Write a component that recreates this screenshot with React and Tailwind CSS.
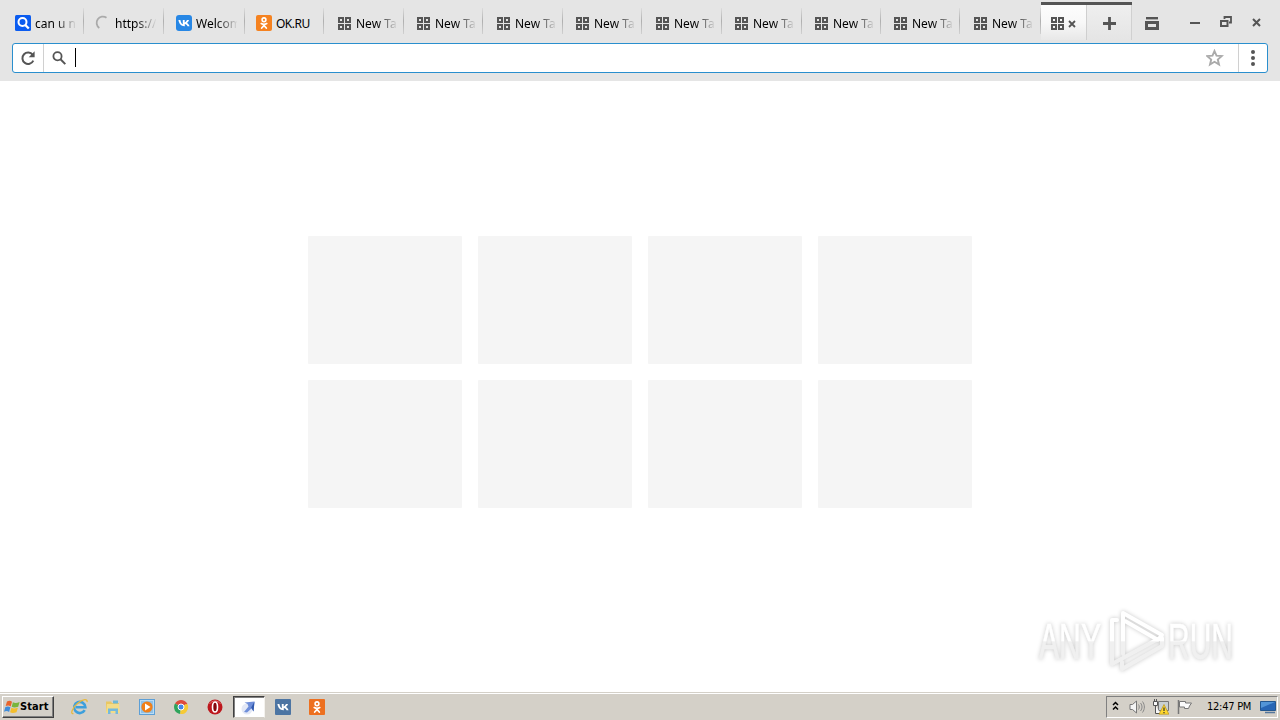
const tabs = [
  { id: 1, title: "can u n", icon: "search", width: "w-[80px]", pad: "pl-[11px]" },
  { id: 2, title: "https://", icon: "loading", width: "w-[80px]", pad: "pl-[11px]" },
  { id: 3, title: "Welcom", icon: "vk", width: "w-[81px]", pad: "pl-[12px]" },
  { id: 4, title: "OK.RU", icon: "ok", width: "w-[79px]", pad: "pl-[11px]" },
  { id: 5, title: "New Ta", icon: "grid", width: "w-[80px]", pad: "pl-[12px]" },
  { id: 6, title: "New Ta", icon: "grid", width: "w-[79px]", pad: "pl-[11px]" },
  { id: 7, title: "New Ta", icon: "grid", width: "w-[80px]", pad: "pl-[12px]" },
  { id: 8, title: "New Ta", icon: "grid", width: "w-[79px]", pad: "pl-[11px]" },
  { id: 9, title: "New Ta", icon: "grid", width: "w-[80px]", pad: "pl-[12px]" },
  { id: 10, title: "New Ta", icon: "grid", width: "w-[80px]", pad: "pl-[11px]" },
  { id: 11, title: "New Ta", icon: "grid", width: "w-[79px]", pad: "pl-[11px]" },
  { id: 12, title: "New Ta", icon: "grid", width: "w-[79px]", pad: "pl-[11px]" },
  { id: 13, title: "New Ta", icon: "grid", width: "w-[81px]", pad: "pl-[12px]" },
];

const tiles = [1, 2, 3, 4, 5, 6, 7, 8];

function Svg({ w = 16, h = 16, className = "", children }) {
  return (
    <svg
      width={w}
      height={h}
      viewBox={`0 0 ${w} ${h}`}
      fill="none"
      className={`shrink-0 ${className}`}
    >
      {children}
    </svg>
  );
}

function VkIcon({ color = "#2787e5", radius = 3 }) {
  return (
    <Svg>
      <rect width="16" height="16" rx={radius} fill={color} />
      <path
        d="M8.3 11.2C5 11.2 3.2 8.9 2.4 5h2c.4 2.400 1.200 3.600 2.400 4.200V5h1.900v2.400C9.700 7.200 10.400 6.200 11 5h2c-.4 1.300-1.200 2.300-2 2.900 1 .5 2.100 1.700 2.600 3.300h-2.100c-.5-1.200-1.400-2.100-2.700-2.200v2.200z"
        fill="#fff"
      />
    </Svg>
  );
}

function OkIcon({ color = "#f58220", radius = 2 }) {
  return (
    <Svg>
      <rect width="16" height="16" rx={radius} fill={color} />
      <circle cx="8" cy="4.8" r="1.9" stroke="#fff" strokeWidth="1.6" />
      <path
        d="M5.300 8.600c1.700 1.100 3.700 1.100 5.400 0M8 9.600v.5M5.700 13 8 10.500l2.300 2.500"
        stroke="#fff"
        strokeWidth="1.800"
        strokeLinecap="round"
      />
    </Svg>
  );
}

function GridIcon() {
  return (
    <Svg w={13} h={13}>
      <g stroke="#555" strokeWidth="2">
        <rect x="1" y="1" width="4" height="4" />
        <rect x="8" y="1" width="4" height="4" />
        <rect x="1" y="8" width="4" height="4" />
        <rect x="8" y="8" width="4" height="4" />
      </g>
    </Svg>
  );
}

function TabIcon({ icon }) {
  if (icon === "vk") return <VkIcon />;
  if (icon === "ok") return <OkIcon />;
  if (icon === "grid") {
    return (
      <span className="flex w-4 h-4 pl-[2px] pt-[2px] shrink-0">
        <GridIcon />
      </span>
    );
  }
  if (icon === "loading") {
    return (
      <Svg>
        <path d="M11.500 2.700A6 6 0 0 0 4.300 13" stroke="#aaa" strokeWidth="1.800" />
      </Svg>
    );
  }
  return (
    <Svg>
      <rect width="16" height="16" rx="1.500" fill="#0b5cf0" />
      <circle cx="7.500" cy="7" r="4" stroke="#fff" strokeWidth="2" />
      <path d="m10.300 10 3.500 3.500" stroke="#fff" strokeWidth="2.400" />
    </Svg>
  );
}

function Tab({ tab }) {
  const fade =
    tab.icon === "ok"
      ? "tracking-[-0.5px]"
      : "[mask-image:linear-gradient(to_right,#000_50%,transparent_102%)]";
  return (
    <div className={`${tab.width} ${tab.pad} flex shrink-0 h-[40px] pt-[15px]`}>
      <TabIcon icon={tab.icon} />
      <span
        className={`ml-[4px] w-[41px] shrink-0 overflow-hidden whitespace-nowrap text-[12px] leading-[17px] text-black ${fade}`}
      >
        {tab.title}
      </span>
      <span className="ml-auto -mt-[7px] w-px h-[26px] bg-linear-to-b from-[#dcdcdc] via-[#b0b0b0] to-[#d0d0d0]" />
    </div>
  );
}

function TabStrip() {
  return (
    <div className="flex h-[40px] pl-[4px] font-['Noto_Sans',sans-serif]">
      {tabs.map((tab) => (
        <Tab key={tab.id} tab={tab} />
      ))}
      <div className="mt-[2px] flex w-[91px] h-[38px] border-t-[3px] border-[#555]">
        <div className="flex w-[46px] pt-[12px] pl-[10px] bg-linear-to-b from-[#fdfdfd] via-[#f8f8f8] to-[#e8e8e8] border-r border-r-[#cfcfcf]">
          <GridIcon />
          <Svg w={8} h={8} className="ml-[4px] mt-[3px]">
            <path d="m1 1 6 6M7 1 1 7" stroke="#555" strokeWidth="1.800" />
          </Svg>
        </div>
        <div className="flex w-[45px] pt-[12px] pl-[16px] bg-linear-to-b from-[#efefef] to-[#e5e5e5] border-r border-r-[#d0d0d0]">
          <Svg w={13} h={13}>
            <path d="M6.500 0v13M0 6.500h13" stroke="#555" strokeWidth="2.800" />
          </Svg>
        </div>
      </div>
      <Svg w={14} h={13} className="ml-[13px] mt-[17px]">
        <path d="M1 1.200h12" stroke="#555" strokeWidth="2.400" />
        <path d="M1.500 5.500h11v6h-11z" stroke="#555" strokeWidth="3" />
      </Svg>
      <Svg w={10} h={2} className="ml-[31px] mt-[22px]">
        <path d="M0 1h10" stroke="#555" strokeWidth="2" />
      </Svg>
      <Svg w={13} h={12} className="ml-[20px] mt-[16px]">
        <path d="M1 5h6.500v5H1z" stroke="#555" strokeWidth="2" />
        <path d="M4.500 3V1h6.500v5.500H9" stroke="#555" strokeWidth="1.800" />
      </Svg>
      <Svg w={9} h={9} className="ml-[19px] mt-[18px]">
        <path d="m1 1 7 7M8 1 1 8" stroke="#555" strokeWidth="2" />
      </Svg>
    </div>
  );
}

function AddressBar() {
  return (
    <div className="mx-[12px] mt-[3px] h-[30px] flex items-center rounded-[3px] border border-[#2a8fce] bg-white">
      <Svg w={16} h={16} className="ml-[7px]">
        <path d="M12.700 4.800A5.700 5.700 0 1 0 13.300 10.600" stroke="#555" strokeWidth="2" />
        <path d="M14.600 1.300v5.900H8.700z" fill="#555" />
      </Svg>
      <span className="ml-[7px] w-px h-full bg-[#d0d0d0]" />
      <Svg w={14} h={14} className="ml-[8px]">
        <circle cx="5.500" cy="5.300" r="4.100" stroke="#555" strokeWidth="1.800" />
        <path d="m8.500 8.300 4.800 4.800" stroke="#555" strokeWidth="2" />
      </Svg>
      <span className="ml-[9px] w-px h-[19px] -mt-px bg-black" />
      <Svg w={18} h={18} className="ml-auto">
        <path
          d="m8.500 2 2 4.700 5.200.4-3.900 3.400 1.200 5L8.500 12.800 4 15.500l1.200-5L1.300 7.100l5.200-.4z"
          stroke="#aaa"
          strokeWidth="1.900"
        />
      </Svg>
      <span className="ml-[14px] w-px h-full bg-[#d0d0d0]" />
      <Svg w={4} h={16} className="ml-[12px] mr-[12px]">
        <circle cx="2" cy="2" r="2" fill="#555" />
        <circle cx="2" cy="8" r="2" fill="#555" />
        <circle cx="2" cy="14" r="2" fill="#555" />
      </Svg>
    </div>
  );
}

function Watermark() {
  return (
    <svg
      width="220"
      height="76"
      viewBox="0 0 220 76"
      fill="none"
      className="absolute left-[1030px] top-[522px] drop-shadow-[0_0_2px_rgba(0,0,0,0.22)]"
    >
      <defs>
        <linearGradient id="mark" x1="0" y1="0" x2="0" y2="76" gradientUnits="userSpaceOnUse">
          <stop offset=".5" stopColor="#fff" />
          <stop offset=".51" stopColor="#f0f0f0" />
        </linearGradient>
      </defs>
      <g
        fill="url(#mark)"
        stroke="url(#mark)"
        strokeWidth=".6"
        fontFamily="Liberation Sans, sans-serif"
        fontSize="50"
      >
        <text x="9" y="56" textLength="62" lengthAdjust="spacingAndGlyphs">
          ANY
        </text>
        <text x="138" y="56" textLength="65" lengthAdjust="spacingAndGlyphs">
          RUN
        </text>
      </g>
      <g stroke="url(#mark)" strokeWidth="4" strokeLinejoin="round" strokeLinecap="round">
        <path d="M93 51V10l39 22-4 5-33-19" />
        <path d="M87 17h-5v44l46-25" />
        <path d="M92 59v7l40-23v-8" />
      </g>
    </svg>
  );
}

function StartButton() {
  return (
    <button className="ml-[2px] flex items-center w-[52px] h-[22px] border border-t-white border-l-white border-r-[#404040] border-b-[#404040] shadow-[inset_-1px_-1px_#808080] font-['DejaVu_Sans_Condensed','DejaVu_Sans',sans-serif] font-bold text-[11px] text-black">
      <Svg w={16} h={16} className="ml-[1px]">
        <path d="M3 2.500c2-1.200 3.700-.9 5 .2L6.700 7.400C5.200 6.300 3.600 6.200 1.700 7z" fill="#e8642c" />
        <path d="M8.900 3.200c1.800 1 3.600 1 6.700-.1l-1.400 4.600c-2.900 1-4.700 1-6.500 0z" fill="#79b53b" />
        <path d="M1.400 8c1.900-.9 3.500-.8 5 .3L5.100 13C3.700 11.900 2 11.700 0 12.700z" fill="#3f8cda" />
        <path d="M7.400 8.700c1.800 1 3.500 1 6.500 0l-1.400 4.500c-2.900 1.100-4.700 1-6.400 0z" fill="#f4be2c" />
      </Svg>
      <span className="whitespace-nowrap tracking-[0.1px]">Start</span>
    </button>
  );
}

function QuickLaunch() {
  return (
    <div className="flex items-center ml-[16px] h-[22px]">
      <Svg w={18} h={18} className="ml-[1px]">
        <path
          d="M13.700 12.200A5.600 5.600 0 1 1 14.400 9.300H5"
          stroke="#3d9fdc"
          strokeWidth="2.600"
        />
        <path d="M2.500 15.500C-1 17 1 9.500 7 5c5-4 10-4.500 9-.8" stroke="#e8b93d" strokeWidth="1.300" />
      </Svg>
      <Svg className="ml-[16px]">
        <path d="M1 2.500h5l1 1.500h7v9H1z" fill="#e9c763" />
        <path d="M8 1.500h5v3H8z" fill="#6eb8d8" />
        <path d="M2 5h12l1 9H1z" fill="#f3dc88" />
        <path d="M3 15V9.500h10V15h-2.500v-3h-5v3z" fill="#75b9dc" />
      </Svg>
      <Svg className="ml-[18px]">
        <rect x=".5" y=".5" width="15" height="15" fill="#b9dcf5" stroke="#5d9fd6" />
        <rect x="2" y="2" width="12" height="12" fill="#8fc1e8" />
        <circle cx="8" cy="8" r="5.600" fill="#f07f18" />
        <path d="m6 4.500 5.500 3.500L6 11.500z" fill="#fff" />
      </Svg>
      <Svg className="ml-[18px]">
        <path d="M8 8 2 4.500A7 7 0 0 1 14.100 4.600z" fill="#de4b3c" />
        <path d="M8 8 2 4.500A7 7 0 0 0 7.200 15z" fill="#2fa45c" />
        <path d="M8 8l6.100-3.500A7 7 0 0 1 7.200 15z" fill="#f6ca35" />
        <path d="M8 4.600h6.100" stroke="#de4b3c" />
        <circle cx="8" cy="8" r="3" fill="#4587e8" stroke="#fff" />
      </Svg>
      <Svg className="ml-[18px]">
        <circle cx="8" cy="8" r="7.500" fill="#bd171d" />
        <path d="M2.500 5C5 1 11 1 13.500 5" stroke="#e06b6b" />
        <ellipse cx="8" cy="8" rx="2.500" ry="5" fill="#86070d" stroke="#fff" strokeWidth="1.600" />
      </Svg>
      <div className="ml-[10px] flex items-center justify-center w-[32px] h-[22px] bg-white border border-t-[#404040] border-l-[#404040] border-r-[#f4f2ee] border-b-[#d4d0c8] shadow-[inset_1px_1px_#808080]">
        <Svg>
          <circle cx="6" cy="10" r="5.500" fill="#e3e8f6" />
          <path d="M3.500 3.500 13.500 2.500 12.500 12.500l-2-3-4.500 4-3-.5 4.500-5.500-1-2.500z" fill="#6f8fda" />
          <path d="M13.500 2.500 12.500 12.500l-2.300-4z" fill="#3159ad" />
        </Svg>
      </div>
      <span className="ml-[10px]">
        <VkIcon color="#4d75a3" radius={1} />
      </span>
      <span className="ml-[18px]">
        <OkIcon color="#ed7020" radius={1} />
      </span>
    </div>
  );
}

function Tray() {
  return (
    <div className="ml-auto mr-[2px] flex items-center w-[172px] h-[22px] border border-t-[#808080] border-l-[#808080] border-r-white border-b-white">
      <Svg w={7} h={10} className="ml-[5px] -mt-[2px]">
        <path d="m1 4 2.500-2.500L6 4M1 8.500 3.500 6 6 8.500" stroke="#000" strokeWidth="1.500" />
      </Svg>
      <Svg className="ml-[10px]">
        <path d="M1 5.500h2.500L7.500 2v12l-4-3.500H1z" fill="#f4f4f4" stroke="#777" />
        <path d="M9.500 5.500c1 1.500 1 3.500 0 5M11.500 4c2 2.500 2 5.500 0 8M13.500 2.500c2.500 3.500 2.500 7.500 0 11" stroke="#888" />
      </Svg>
      <Svg className="ml-[8px]">
        <path d="M5.500 2.500h10v9h-10z" fill="#c9d0d2" stroke="#777" />
        <path d="M.5 2.500h4v4h-4zM2.500 6.500v8h5M1.500 0v2M3.500 0v2" fill="#f8f8f8" stroke="#555" />
        <path d="m11 5.500 4.900 9.700H6z" fill="#ffd82d" stroke="#ba941b" strokeWidth=".7" />
        <path d="M11 8.500v3.500M11 13v1.200" stroke="#333" strokeWidth="1.200" />
      </Svg>
      <Svg className="ml-[8px]">
        <path d="M1.500 1v14" stroke="#777" strokeWidth="1.500" />
        <path d="M2.500 2.500h6v1.500h6L12.500 7l-1 2.500h-4V8h-5z" fill="#fbfbfb" stroke="#777" />
      </Svg>
      <span className="ml-[14px] w-[46px] whitespace-nowrap font-['DejaVu_Sans_Condensed','DejaVu_Sans',sans-serif] text-[11px] tracking-[-0.25px] text-black">
        12:47 PM
      </span>
      <Svg className="ml-[7px]">
        <path d="M.5 2.500h15v9H.5z" fill="#2866b5" stroke="#24578f" />
        <path d="M1 3h14L1 9z" fill="#5395d7" />
        <path d="M5 13.500h10" stroke="#55779c" strokeWidth="1.500" />
      </Svg>
    </div>
  );
}

export default function App() {
  return (
    <div className="flex flex-col w-[1280px] h-[720px] overflow-hidden bg-white">
      <header className="h-[81px] bg-[#e5e5e5]">
        <TabStrip />
        <AddressBar />
      </header>

      <main className="relative h-[611px] pt-[155px]">
        <div className="mx-auto grid w-[664px] grid-cols-4 gap-4">
          {tiles.map((tile) => (
            <div key={tile} className="h-[128px] bg-[#f5f5f5] rounded-[1px]" />
          ))}
        </div>
        <Watermark />
      </main>

      <footer className="flex h-[28px] pt-[2px] bg-[#d4d0c8] border-t border-[#d4d0c8] shadow-[inset_0_1px_#fff]">
        <div className="flex w-full pt-[1px]">
          <StartButton />
          <QuickLaunch />
          <Tray />
        </div>
      </footer>
    </div>
  );
}
